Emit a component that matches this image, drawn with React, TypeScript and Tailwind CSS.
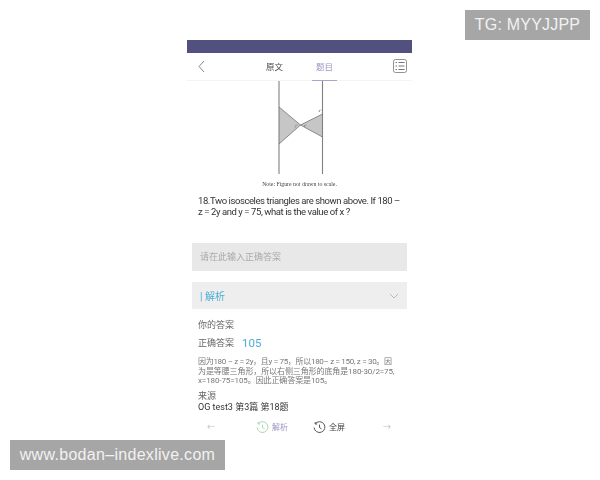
import React from "react";

function Clock({ color }: { color: string }) {
  return (
    <svg width="13" height="13" viewBox="0 0 13 13" fill="none" stroke={color} strokeWidth="1">
      <path d="M2.2 2.8A5.4 5.4 0 1 1 1.1 6.5" />
      <path d="M2.2 1v2h2" />
      <path d="M6.5 3.6v3l2 1.2" />
    </svg>
  );
}

export default function App() {
  return (
    <div className="relative w-[600px] h-[480px] bg-white overflow-hidden font-['Roboto','Noto_Sans_CJK_SC',sans-serif]">
      <div className="absolute right-[10px] top-[10px] w-[125px] h-[30px] bg-[#a6a6a6] flex items-center justify-center text-[16px] tracking-[0.2px] text-[#f2f2f2] font-['Liberation_Sans',sans-serif]">
        TG: MYYJJPP
      </div>
      <div className="absolute left-[10px] top-[440px] w-[215px] h-[30px] bg-[#a6a6a6] flex items-center justify-center text-[16px] tracking-[0.3px] text-[#f2f2f2] font-['Liberation_Sans',sans-serif]">
        www.bodan–indexlive.com
      </div>

      <div className="ml-[187px] pt-[40px] w-[225px] flex flex-col blur-[0.3px]">
        <div className="h-[13px] bg-[#52507f]" />
        <div className="h-[28px] flex items-center relative border-b border-[#f4f4f4] shrink-0">
          <svg className="absolute left-[11px] top-[7px]" width="7" height="13" viewBox="0 0 7 13" fill="none" stroke="#777" strokeWidth="0.9">
            <path d="M6 1 1 6.5 6 12" />
          </svg>
          <div className="w-full flex justify-center gap-[33px] text-[8.500px] pt-[1px]">
            <span className="text-[#444] w-[17px] whitespace-nowrap">原文</span>
            <span className="text-[#9a95c4] w-[17px] whitespace-nowrap">题目</span>
          </div>
          <div className="absolute left-[125px] bottom-[-1px] w-[25px] h-[1px] bg-[#a9a7c9]" />
          <svg className="absolute left-[206px] top-[6px]" width="14" height="14" viewBox="0 0 14 14" fill="none" stroke="#777" strokeWidth="0.8">
            <rect x="0.5" y="0.5" width="13" height="13" rx="2" />
            <path d="M5.5 3.500h6M5.500 7h6M5.500 10.500h6M2.500 3.500h1.500M2.500 7h1.500M2.500 10.500h1.500" strokeWidth="1.100" />
          </svg>
        </div>

        <div className="flex flex-col items-center h-[108px]">
          <svg width="60" height="94" viewBox="0 0 60 94" className="shrink-0">
            <path d="M9 26 30.500 44 9 63Z" fill="#c6c6c6" />
            <path d="M30.500 44 52.500 33V56Z" fill="#c6c6c6" />
            <path d="M9 0V93M52.500 0V93" stroke="#808080" strokeWidth="1.100" fill="none" />
            <path d="M9 26 30.500 44 52.500 56M9 63 30.500 44 52.500 33" stroke="#666" strokeWidth="0.7" fill="none" />
            <text x="48.500" y="31" fontSize="4" fill="#555" fontStyle="italic" fontFamily="Liberation Serif">x°</text>
            <text x="25" y="46" fontSize="3.500" fill="#555" fontStyle="italic" fontFamily="Liberation Serif">y°</text>
            <text x="34" y="46" fontSize="3.500" fill="#555" fontStyle="italic" fontFamily="Liberation Serif">z°</text>
          </svg>
          <div className="mt-[6px] text-[5.800px] leading-[7px] text-[#444] font-['Liberation_Serif',serif] whitespace-nowrap">
            Note: Figure not drawn to scale.
          </div>
        </div>

        <div className="px-[11px] mt-[7px] text-[9.500px] leading-[10.500px] text-[#333] h-[47px] tracking-[-0.42px] whitespace-nowrap">
          <div>18.Two isosceles triangles are shown above. If 180 –</div>
          <div>z = 2y and y = 75, what is the value of x ?</div>
        </div>

        <div className="mx-[5px] h-[28px] bg-[#e8e8e8] flex items-center px-[8px] pt-[2px] text-[9px] text-[#aaa]">
          请在此输入正确答案
        </div>

        <div className="mx-[5px] mt-[11px] h-[27px] bg-[#eeeeee] flex items-center px-[8px] pt-[1px] text-[#4aaed6] text-[10px] justify-between">
          <span>| 解析</span>
          <svg width="10" height="6" viewBox="0 0 10 6" fill="none" stroke="#aaa" strokeWidth="0.8">
            <path d="M1 1 5 5 9 1" />
          </svg>
        </div>

        <div className="px-[11px] mt-[10px] text-[9px] text-[#666] leading-[12px]">你的答案</div>

        <div className="px-[11px] mt-[6px] flex items-center gap-[8px] h-[14px]">
          <span className="text-[9px] text-[#666]">正确答案</span>
          <span className="text-[11.500px] text-[#4aaed6]">105</span>
        </div>

        <div className="px-[11px] mt-[6px] text-[8px] leading-[9.500px] text-[#777] whitespace-nowrap tracking-[-0.1px]">
          <div className="tracking-[-0.3px]">因为180 – z = 2y，且y = 75，所以180– z = 150, z = 30。因</div>
          <div>为是等腰三角形，所以右侧三角形的底角是180-30/2=75,</div>
          <div>x=180-75=105。因此正确答案是105。</div>
        </div>

        <div className="px-[11px] mt-[5px] text-[9px] leading-[11px] text-[#666]">来源</div>
        <div className="px-[11px] text-[9px] leading-[11px] text-[#333] whitespace-nowrap">OG test3 第3篇 第18题</div>

        <div className="mt-[4px] h-[22px] flex items-center text-[8px]">
          <span className="w-[48px] pl-[20px] text-[#bbb]">←</span>
          <span className="w-[57px] ml-[21px] flex items-center gap-[3px] text-[#9a95c4]">
            <Clock color="#a6d8b0" />解析
          </span>
          <span className="flex items-center gap-[3px] text-[#444] w-[60px]">
            <Clock color="#555" />全屏
          </span>
          <span className="text-[#bbb] ml-[10px]">→</span>
        </div>
      </div>
    </div>
  );
}
